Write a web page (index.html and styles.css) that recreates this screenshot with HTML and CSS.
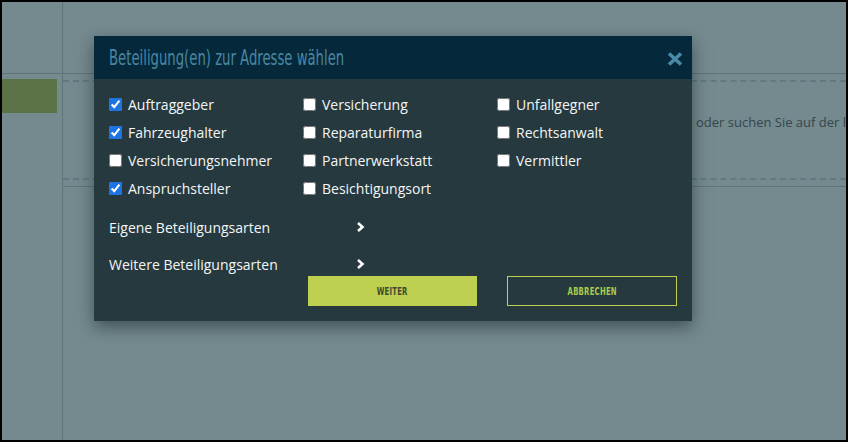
FILE: index.html
```html
<!DOCTYPE html>
<html lang="de">
<head>
<meta charset="utf-8">
<title>Beteiligung(en) zur Adresse wählen</title>
<link rel="stylesheet" href="styles.css">
</head>
<body>
<div class="screen">
  <aside class="side">
    <div class="side-box"><div class="side-btn"></div></div>
  </aside>
  <main class="content">
    <div class="zone">
      <div class="dashed"><p class="hint">oder suchen Sie auf der linken Seite nach einer Adresse</p></div>
    </div>
  </main>

  <div class="modal">
    <div class="modal-head">
      <h1 class="title"><span>Beteiligung(en) zur Adresse wählen</span></h1>
      <svg class="close" width="16" height="14" viewBox="0 0 16 14"><path d="M2 1.5 L14 12.5 M14 1.5 L2 12.5" stroke="#4a89a7" stroke-width="3.6" stroke-linecap="butt"/></svg>
    </div>
    <div class="modal-body">
      <div class="grid">
        <label class="opt"><input type="checkbox" checked><span>Auftraggeber</span></label>
        <label class="opt"><input type="checkbox"><span>Versicherung</span></label>
        <label class="opt"><input type="checkbox"><span>Unfallgegner</span></label>
        <label class="opt"><input type="checkbox" checked><span>Fahrzeughalter</span></label>
        <label class="opt"><input type="checkbox"><span>Reparaturfirma</span></label>
        <label class="opt"><input type="checkbox"><span>Rechtsanwalt</span></label>
        <label class="opt"><input type="checkbox"><span>Versicherungsnehmer</span></label>
        <label class="opt"><input type="checkbox"><span>Partnerwerkstatt</span></label>
        <label class="opt"><input type="checkbox"><span>Vermittler</span></label>
        <label class="opt"><input type="checkbox" checked><span>Anspruchsteller</span></label>
        <label class="opt"><input type="checkbox"><span>Besichtigungsort</span></label>
      </div>
      <div class="link first"><span>Eigene Beteiligungsarten</span><svg width="9" height="10" viewBox="0 0 9 10"><path d="M2 1 L6.5 5 L2 9" fill="none" stroke="#fff" stroke-width="2.6"/></svg></div>
      <div class="link second"><span>Weitere Beteiligungsarten</span><svg width="9" height="10" viewBox="0 0 9 10"><path d="M2 1 L6.5 5 L2 9" fill="none" stroke="#fff" stroke-width="2.6"/></svg></div>
      <div class="actions">
        <button class="btn primary"><span>WEITER</span></button>
        <button class="btn outline"><span>ABBRECHEN</span></button>
      </div>
    </div>
  </div>
</div>
</body>
</html>
```
FILE: styles.css
```css
* { box-sizing: border-box; }
html, body { margin: 0; padding: 0; }
body {
  background: #000;
  width: 848px;
  height: 442px;
  overflow: hidden;
  font-family: "Open Sans", "DejaVu Sans", sans-serif;
}
.screen {
  margin: 2px;
  width: 844px;
  height: 438px;
  background: #758a8f;
  display: flex;
  position: relative;
  overflow: hidden;
}
.side {
  width: 61px;
  flex: none;
  border-right: 1px solid #5f7479;
}
.side-box {
  margin-top: 71px;
  border-top: 1px solid #5f7479;
  padding-top: 5px;
}
.side-btn {
  width: 55px;
  height: 34px;
  background: #5b7346;
}
.content {
  flex: 1;
  min-width: 0;
}
.zone {
  margin-top: 71px;
  border-top: 1px solid #5f7479;
  border-bottom: 1px solid #5f7479;
  padding: 6px 0;
}
.dashed {
  height: 100px;
  border-top: 2px dashed #62797f;
  border-bottom: 2px dashed #62797f;
  padding: 31px 0 0 633px;
}
.hint {
  margin: 0;
  white-space: nowrap;
  font-size: 13px;
  line-height: 18px;
  color: #34464b;
}

.modal {
  position: absolute;
  left: 92px;
  top: 34px;
  width: 598px;
  background: #25393f;
  box-shadow: 0 6px 16px rgba(20, 35, 40, 0.55);
}
.modal-head {
  height: 43px;
  background: #05293a;
  display: flex;
  align-items: center;
  justify-content: space-between;
  padding: 0 9px 0 15px;
}
.title {
  margin: 0;
  font-weight: normal;
  font-size: 21px;
  line-height: 24px;
  color: #4a86a2;
  font-family: "DejaVu Sans Condensed", "DejaVu Sans", sans-serif;
}
.title span {
  display: inline-block;
  transform: scaleX(0.7);
  transform-origin: left center;
  white-space: nowrap;
}
.close { margin-top: 3px; }
.modal-body {
  padding: 11px 15px 15px 15px;
}
.grid {
  display: grid;
  grid-template-columns: 194px 194px 180px;
  grid-auto-rows: 28px;
}
.opt {
  display: flex;
  align-items: center;
  gap: 6px;
  font-size: 14px;
  color: #f4f6f6;
  white-space: nowrap;
}
.opt input {
  margin: 0;
  width: 13px;
  height: 13px;
  accent-color: #1b74e2;
}
.link {
  width: 256px;
  height: 22px;
  display: flex;
  align-items: center;
  justify-content: space-between;
  font-size: 14px;
  color: #f4f6f6;
}
.link.first { margin-top: 14px; }
.link.second { margin-top: 15px; }
.actions {
  display: flex;
  justify-content: flex-end;
  gap: 30px;
  margin-top: 1px;
}
.btn {
  width: 170px;
  height: 30px;
  padding: 0;
  font-family: "DejaVu Sans Condensed", "DejaVu Sans", sans-serif;
  font-weight: bold;
  font-size: 11px;
  letter-spacing: 0.3px;
  cursor: pointer;
}
.btn span {
  display: inline-block;
  transform: scaleX(0.7);
}
.btn.primary {
  width: 169px;
  background: #bfcf50;
  border: none;
  color: #3f4a2c;
}
.btn.outline {
  background: transparent;
  border: 1px solid #bfcf50;
  color: #a9cc4c;
}
```
